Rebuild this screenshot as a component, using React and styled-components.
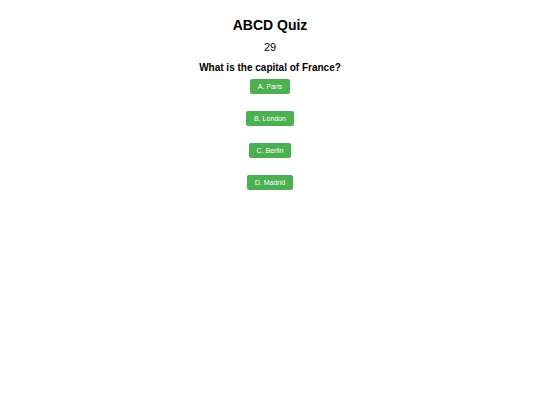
import React, { useState } from 'react';
import styled, { createGlobalStyle } from 'styled-components';

const GlobalStyle = createGlobalStyle`
  html, body {
    margin: 0;
    padding: 0;
    background: #ffffff;
    font-family: "Liberation Sans", Arial, sans-serif;
    color: #000000;
  }
`;

const Page = styled.div`
  display: flex;
  flex-direction: column;
  align-items: center;
  padding-top: 17px;
`;

const Title = styled.h1`
  margin: 0;
  font-size: 14px;
  line-height: 17px;
  font-weight: bold;
`;

const Timer = styled.div`
  margin-top: 7px;
  font-size: 11px;
  line-height: 13px;
`;

const Question = styled.h2`
  margin: 8px 0 0;
  font-size: 10px;
  line-height: 12px;
  font-weight: bold;
`;

const Answers = styled.div`
  display: flex;
  flex-direction: column;
  align-items: center;
  gap: 17px;
  margin-top: 5px;
`;

const Answer = styled.button`
  background: #4caf50;
  color: #ffffff;
  border: none;
  border-radius: 2px;
  padding: 0 8px;
  height: 15px;
  font-family: "Liberation Sans", Arial, sans-serif;
  font-size: 7px;
  cursor: pointer;
`;

const options = ['A. Paris', 'B. London', 'C. Berlin', 'D. Madrid'];

const App = () => {
  const [time] = useState(29);

  return (
    <Page>
      <GlobalStyle />
      <Title>ABCD Quiz</Title>
      <Timer>{time}</Timer>
      <Question>What is the capital of France?</Question>
      <Answers>
        {options.map(o => (
          <Answer key={o}>{o}</Answer>
        ))}
      </Answers>
    </Page>
  );
};

export default App;
